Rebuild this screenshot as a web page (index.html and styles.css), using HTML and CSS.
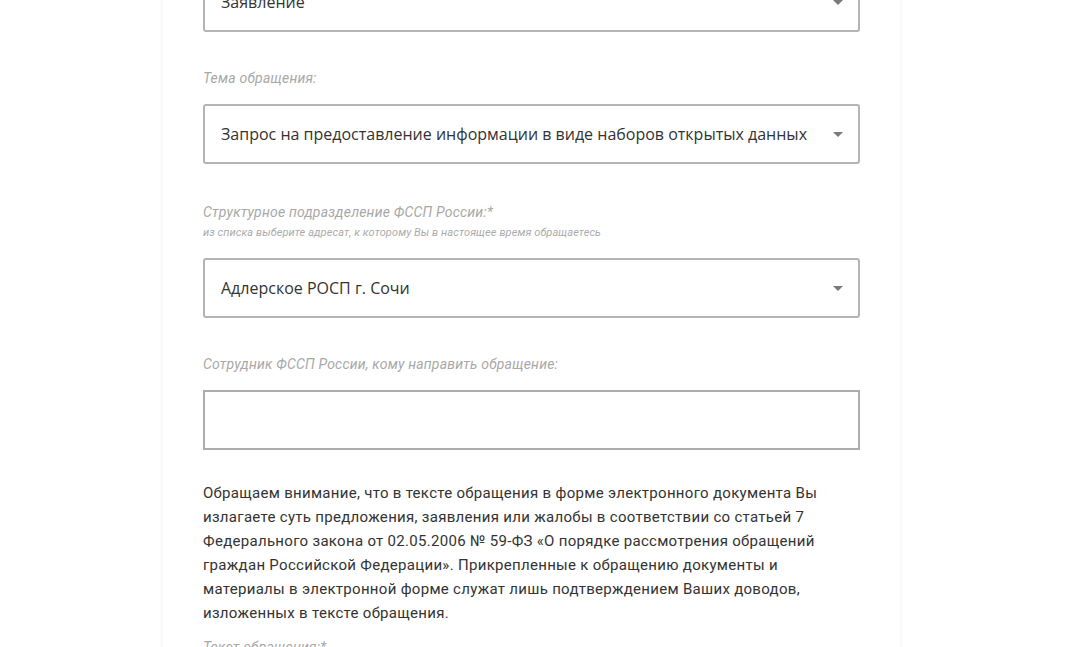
FILE: index.html
```html
<!DOCTYPE html>
<html lang="ru">
<head>
<meta charset="utf-8">
<title>Обращение</title>
<link rel="stylesheet" href="styles.css">
</head>
<body>
<div class="page">
  <div class="card">
    <div class="select select-first">
      <span class="select-value">Заявление</span>
      <svg class="caret" width="10" height="5" viewBox="0 0 10 5"><path d="M0 0 L10 0 L5 5 Z" fill="#7a7a7a"/></svg>
    </div>

    <div class="field f2">
      <div class="label">Тема обращения:</div>
      <div class="select">
        <span class="select-value">Запрос на предоставление информации в виде наборов открытых данных</span>
        <svg class="caret" width="10" height="5" viewBox="0 0 10 5"><path d="M0 0 L10 0 L5 5 Z" fill="#7a7a7a"/></svg>
      </div>
    </div>

    <div class="field f3">
      <div class="label">Структурное подразделение ФССП России:*</div>
      <div class="hint">из списка выберите адресат, к которому Вы в настоящее время обращаетесь</div>
      <div class="select select-hinted">
        <span class="select-value">Адлерское РОСП г. Сочи</span>
        <svg class="caret" width="10" height="5" viewBox="0 0 10 5"><path d="M0 0 L10 0 L5 5 Z" fill="#7a7a7a"/></svg>
      </div>
    </div>

    <div class="field f4">
      <div class="label">Сотрудник ФССП России, кому направить обращение:</div>
      <div class="input"></div>
    </div>

    <p class="notice">Обращаем внимание, что в тексте обращения в форме электронного документа Вы излагаете суть предложения, заявления или жалобы в соответствии со статьей 7 Федерального закона от 02.05.2006 № 59-ФЗ «О порядке рассмотрения обращений граждан Российской Федерации». Прикрепленные к обращению документы и материалы в электронной форме служат лишь подтверждением Ваших доводов, изложенных в тексте обращения.</p>

    <div class="label last-label">Текст обращения:*</div>
  </div>
</div>
</body>
</html>
```

FILE: styles.css
```css
html, body {
  margin: 0;
  padding: 0;
  background: #ffffff;
  height: 100%;
  overflow: hidden;
}

.page {
  padding-left: 163px;
}

.card {
  width: 737px;
  box-sizing: border-box;
  padding: 0 40px 40px 40px;
  background: #ffffff;
  box-shadow: 0 0 5px rgba(0, 0, 0, 0.07);
  min-height: 720px;
  font-family: Roboto, "Liberation Sans", sans-serif;
}

.select {
  box-sizing: border-box;
  height: 60px;
  border: 2px solid #b4b4b4;
  border-radius: 3px;
  display: flex;
  align-items: center;
  justify-content: space-between;
  padding: 0 15px 0 16px;
  font-family: "Open Sans", "Liberation Sans", sans-serif;
  font-size: 16px;
  color: #333333;
  margin-top: 18px;
}

.select-first {
  margin-top: -28px;
}

.select-value {
  white-space: nowrap;
}

.caret {
  flex: none;
  margin-top: 1px;
}

.label {
  font-style: italic;
  font-size: 14px;
  letter-spacing: 0.2px;
  line-height: 16px;
  color: #a8a8a8;
}

.hint {
  font-style: italic;
  font-size: 11px;
  letter-spacing: 0.1px;
  line-height: 12px;
  color: #ababab;
  margin-top: 7px;
}

.f2 { margin-top: 38px; }
.f3 { margin-top: 40px; }
.f4 { margin-top: 38px; }

.select-hinted { margin-top: 19px; }

.input {
  box-sizing: border-box;
  height: 60px;
  border: 2px solid #adadad;
  margin-top: 18px;
}

.notice {
  margin: 31px 0 0 0;
  max-width: 625px;
  font-size: 15px;
  letter-spacing: 0.3px;
  line-height: 24px;
  color: #333333;
}

.last-label {
  margin-top: 14px;
}
```
